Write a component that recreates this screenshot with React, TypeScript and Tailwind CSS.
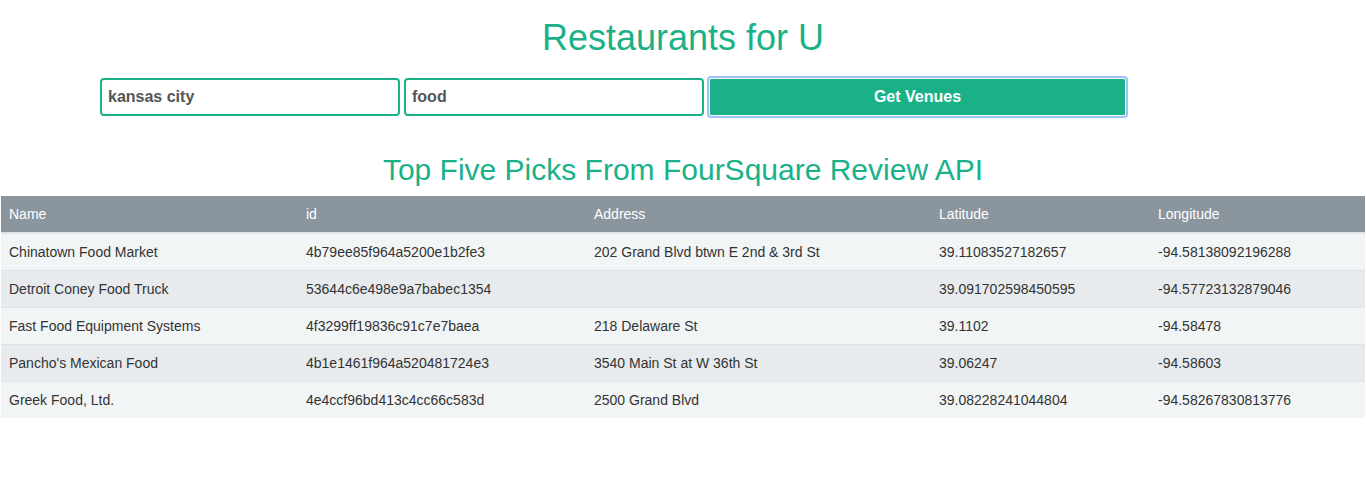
import React from 'react';

const venues = [
  { name: 'Chinatown Food Market', id: '4b79ee85f964a5200e1b2fe3', address: '202 Grand Blvd btwn E 2nd & 3rd St', lat: '39.11083527182657', lng: '-94.58138092196288' },
  { name: 'Detroit Coney Food Truck', id: '53644c6e498e9a7babec1354', address: '', lat: '39.091702598450595', lng: '-94.57723132879046' },
  { name: 'Fast Food Equipment Systems', id: '4f3299ff19836c91c7e7baea', address: '218 Delaware St', lat: '39.1102', lng: '-94.58478' },
  { name: "Pancho's Mexican Food", id: '4b1e1461f964a520481724e3', address: '3540 Main St at W 36th St', lat: '39.06247', lng: '-94.58603' },
  { name: 'Greek Food, Ltd.', id: '4e4ccf96bd413c4cc66c583d', address: '2500 Grand Blvd', lat: '39.08228241044804', lng: '-94.58267830813776' },
];

// column widths read off the screenshot
const cols = ['w-[297px]', 'w-[288px]', 'w-[345px]', 'w-[219px]', 'w-[215px]'];

export default function App() {
  return (
    <div className="min-h-[502px] bg-white font-['Liberation_Sans',Arial,sans-serif]">
      <h1 className="pt-[17px] text-center text-[36px] leading-[41px] text-[#1ab188]">Restaurants for U</h1>

      <form className="mt-[20px] flex items-center gap-1 pl-[100px]" onSubmit={e => e.preventDefault()}>
        <input
          defaultValue="kansas city"
          className="h-[38px] w-[300px] rounded-[4px] border-2 border-[#1ab188] px-[6px] text-[16px] font-bold text-[#555] outline-none"
        />
        <input
          defaultValue="food"
          className="h-[38px] w-[300px] rounded-[4px] border-2 border-[#1ab188] px-[6px] text-[16px] font-bold text-[#555] outline-none"
        />
        <button
          type="submit"
          className="ml-px h-[38px] w-[417px] rounded-[2px] border border-white bg-[#1ab188] text-[16px] font-bold text-white outline-2 outline-[#9ec2f7]"
        >
          Get Venues
        </button>
      </form>

      <h2 className="mt-[36px] text-center text-[30px] leading-[36px] text-[#1ab188]">Top Five Picks From FourSquare Review API</h2>

      <table className="mt-[8px] ml-px w-[1364px] border-collapse text-left text-[14px] leading-[20px]">
        <thead>
          <tr className="bg-[#8a959e] text-white">
            {['Name', 'id', 'Address', 'Latitude', 'Longitude'].map((h, i) => (
              <th key={h} className={`${cols[i]} border-b-2 border-[#dee2e6] px-2 py-2 font-normal`}>{h}</th>
            ))}
          </tr>
        </thead>
        <tbody>
          {venues.map((v, r) => (
            <tr key={v.id} className={r % 2 === 0 ? 'bg-[#f2f5f5] text-[#333]' : 'bg-[#e7ebed] text-[#333]'}>
              {[v.name, v.id, v.address, v.lat, v.lng].map((c, i) => (
                <td key={i} className={`${r === 0 ? '' : 'border-t border-[#dee2e6]'} px-2 py-2`}>{c}</td>
              ))}
            </tr>
          ))}
        </tbody>
      </table>
    </div>
  );
}
